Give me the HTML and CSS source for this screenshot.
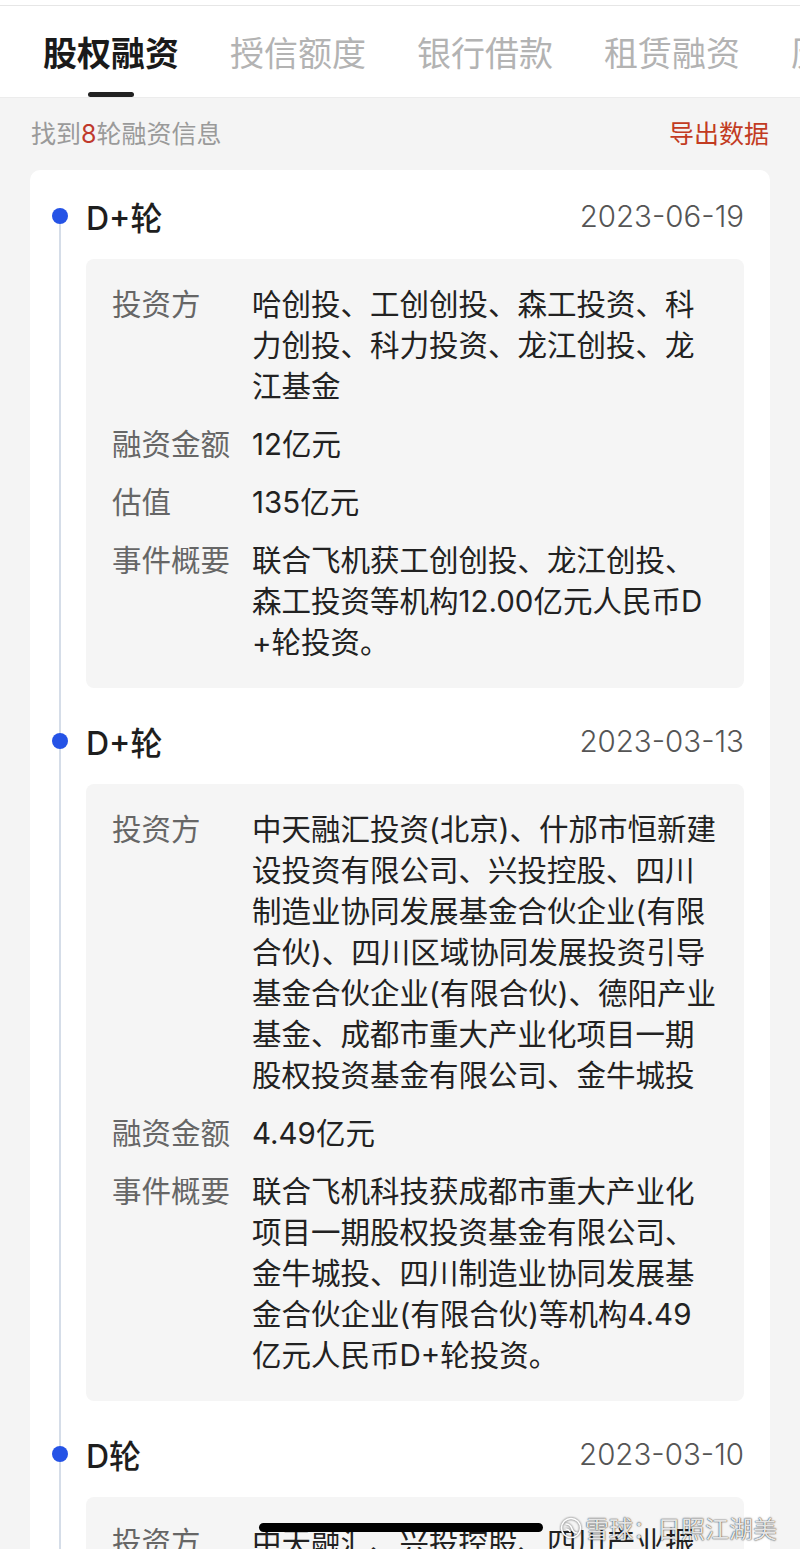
FILE: index.html
```html
<!DOCTYPE html>
<html>
<head>
    <meta charset="utf-8">
    <title>融资信息</title>
    <link rel="stylesheet" href="styles.css">
</head>
<body>
    <!-- Tabs -->
    <header class="topbar">
        <nav class="tabs">
            <span class="tab active">股权融资</span>
            <span class="tab">授信额度</span>
            <span class="tab">银行借款</span>
            <span class="tab">租赁融资</span>
            <span class="tab">历史融资</span>
        </nav>
    </header>

    <!-- Summary line -->
    <div class="summary">
        <span class="count">找到<em>8</em>轮融资信息</span>
        <a class="export" href="#">导出数据</a>
    </div>

    <!-- Timeline of rounds -->
    <section class="card">
        <div class="entry">
            <div class="entry-head">
                <span class="round">D+轮</span>
                <span class="date">2023-06-19</span>
            </div>
            <dl class="info">
                <div class="row">
                    <dt>投资方</dt>
                    <dd>哈创投、工创创投、森工投资、科<br>力创投、科力投资、龙江创投、龙<br>江基金</dd>
                </div>
                <div class="row">
                    <dt>融资金额</dt>
                    <dd>12亿元</dd>
                </div>
                <div class="row">
                    <dt>估值</dt>
                    <dd>135亿元</dd>
                </div>
                <div class="row">
                    <dt>事件概要</dt>
                    <dd>联合飞机获工创创投、龙江创投、<br>森工投资等机构12.00亿元人民币D<br>+轮投资。</dd>
                </div>
            </dl>
        </div>

        <div class="entry">
            <div class="entry-head">
                <span class="round">D+轮</span>
                <span class="date">2023-03-13</span>
            </div>
            <dl class="info">
                <div class="row">
                    <dt>投资方</dt>
                    <dd>中天融汇投资(北京)、什邡市恒新建<br>设投资有限公司、兴投控股、四川<br>制造业协同发展基金合伙企业(有限<br>合伙)、四川区域协同发展投资引导<br>基金合伙企业(有限合伙)、德阳产业<br>基金、成都市重大产业化项目一期<br>股权投资基金有限公司、金牛城投</dd>
                </div>
                <div class="row">
                    <dt>融资金额</dt>
                    <dd>4.49亿元</dd>
                </div>
                <div class="row">
                    <dt>事件概要</dt>
                    <dd>联合飞机科技获成都市重大产业化<br>项目一期股权投资基金有限公司、<br>金牛城投、四川制造业协同发展基<br>金合伙企业(有限合伙)等机构4.49<br>亿元人民币D+轮投资。</dd>
                </div>
            </dl>
        </div>

        <div class="entry">
            <div class="entry-head">
                <span class="round">D轮</span>
                <span class="date">2023-03-10</span>
            </div>
            <dl class="info">
                <div class="row">
                    <dt>投资方</dt>
                    <dd>中天融汇、兴投控股、四川产业振<br>兴发展投资基金</dd>
                </div>
            </dl>
        </div>
    </section>

    <!-- Screenshot overlays -->
    <div class="home-bar"></div>
    <div class="watermark">
        <svg width="22" height="22" viewBox="0 0 22 22">
            <circle cx="11" cy="11" r="9.5" fill="none" stroke="#fff" stroke-width="1.6"/>
            <path d="M6 7c3 0 5 2 6 5s3 4 5 4M6 12c2 0 3 1 4 2.5" fill="none" stroke="#fff" stroke-width="1.6" stroke-linecap="round"/>
        </svg>
        <span>雪球：日照江湖美</span>
    </div>
</body>
</html>
```

FILE: styles.css
```css
/* General */
body {
    margin: 0;
    background-color: #f4f4f4;
    font-family: "Inter", "Noto Sans CJK SC", sans-serif;
    color: #222222;
}

/* Tabs */
.topbar {
    background-color: #ffffff;
    padding-top: 5px;
    border-bottom: 1px solid #ececec;
}

.tabs {
    display: flex;
    gap: 51px;
    height: 91px;
    padding-left: 43px;
    border-top: 1px solid #e6e6e6;
    overflow: hidden;
    white-space: nowrap;
}

.tab {
    position: relative;
    flex-shrink: 0;
    padding-top: 24px;
    font-family: "Noto Sans CJK SC", sans-serif;
    font-size: 34px;
    line-height: 44px;
    color: #b3b3b3;
}

.tab.active {
    color: #1a1a1a;
    font-weight: 700;
}

.tab.active::after {
    content: "";
    position: absolute;
    left: 50%;
    bottom: 0;
    width: 46px;
    height: 5px;
    margin-left: -23px;
    border-radius: 3px;
    background-color: #222222;
}

/* Summary */
.summary {
    display: flex;
    justify-content: space-between;
    align-items: center;
    height: 68px;
    padding: 0 31px 4px;
    font-size: 25px;
}

.count {
    color: #9a9a9a;
}

.count em {
    font-style: normal;
    color: #c0392b;
}

.export {
    color: #c23b22;
    text-decoration: none;
}

/* Card with timeline */
.card {
    margin: 0 30px;
    padding: 22px 26px 0 56px;
    background-color: #ffffff;
    border-radius: 10px;
}

.entry {
    position: relative;
    padding-bottom: 29px;
}

.entry::before {
    content: "";
    position: absolute;
    left: -27px;
    top: 0;
    bottom: 0;
    width: 2px;
    background-color: #d5dde8;
}

.entry:first-child::before {
    top: 24px;
}

.entry::after {
    content: "";
    position: absolute;
    left: -34px;
    top: 16px;
    width: 16px;
    height: 16px;
    border-radius: 50%;
    background-color: #2553e6;
}

.entry-head {
    display: flex;
    justify-content: space-between;
    align-items: center;
    height: 48px;
    margin-bottom: 19px;
}

.round {
    font-size: 32px;
    font-weight: 500;
    color: #1e1e1e;
}

.date {
    font-size: 29.5px;
    font-weight: 300;
    color: #555555;
}

.info {
    display: flex;
    flex-direction: column;
    gap: 17px;
    margin: 0;
    padding: 25px 22px 25px 26px;
    background-color: #f5f5f5;
    border-radius: 8px;
    font-size: 29.5px;
    line-height: 41px;
}

.row {
    display: flex;
}

.row dt {
    flex: 0 0 140px;
    color: #666666;
}

.row dd {
    flex: 1;
    margin: 0;
    color: #222222;
}

/* Overlays from the phone screenshot */
.home-bar {
    position: absolute;
    left: 259px;
    top: 1523px;
    width: 284px;
    height: 9px;
    border-radius: 5px;
    background-color: #000000;
}

.watermark {
    position: absolute;
    left: 560px;
    top: 1510px;
    display: flex;
    align-items: center;
    gap: 3px;
    font-family: "Noto Sans CJK SC", sans-serif;
    font-size: 24px;
    color: rgba(255, 255, 255, 0.9);
    text-shadow: 0 0 1px rgba(0, 0, 0, 0.8), 0 0 2px rgba(0, 0, 0, 0.5);
}

.watermark svg {
    filter: drop-shadow(0 0 1px rgba(0, 0, 0, 0.7));
}
```
